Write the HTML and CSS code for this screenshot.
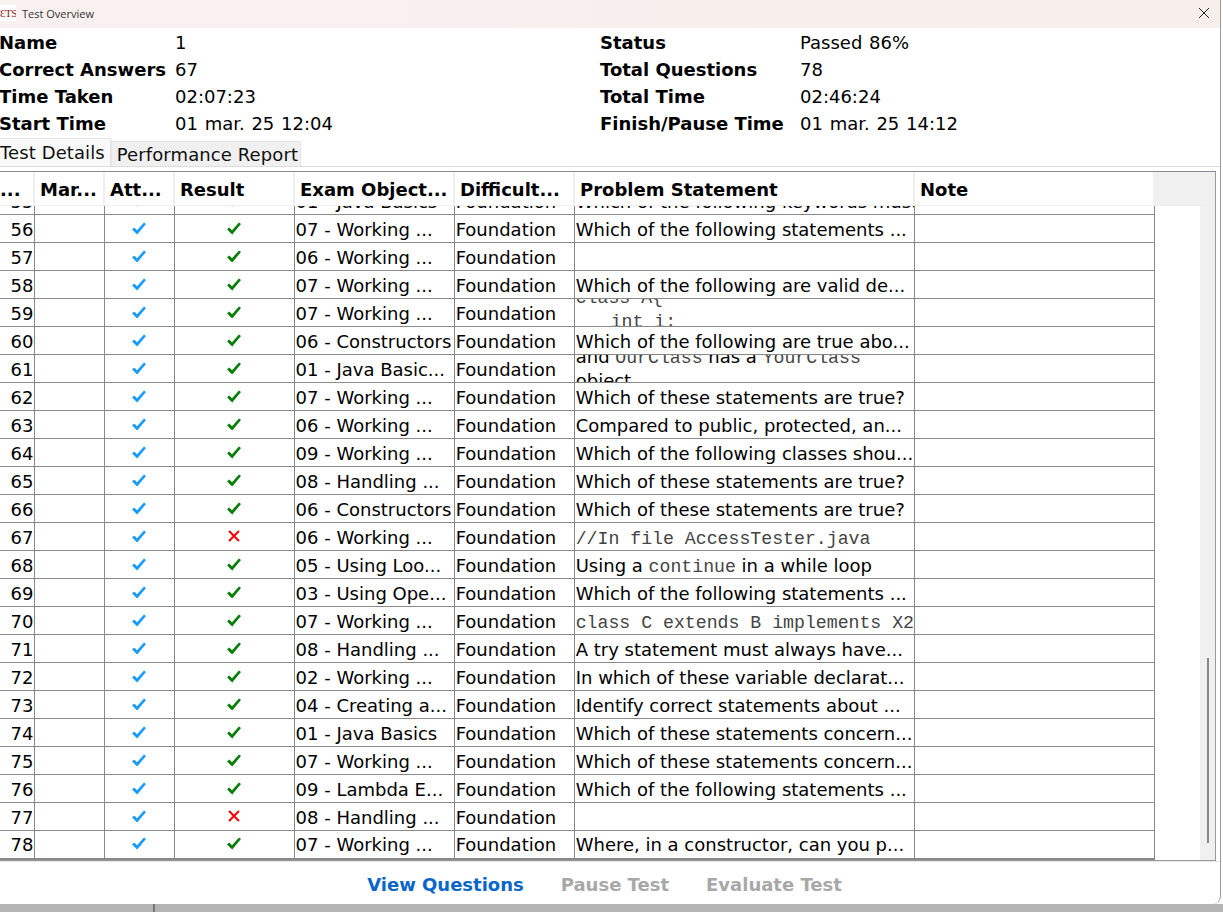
FILE: index.html
```html
<!DOCTYPE html>
<html lang="en">
<head>
  <meta charset="UTF-8">
  <title>Test Overview</title>
  <link rel="stylesheet" href="styles.css">
</head>
<body>
  <svg class="defs" width="0" height="0">
    <symbol id="tick" viewBox="0 0 14 13"><path d="M0 7.5 2.2 5.6 5 8.2 12 .5 14 2 5.2 12.6z"/></symbol>
    <symbol id="cross" viewBox="0 0 12 12"><path d="M1 1 11 11M11 1 1 11" fill="none" stroke="currentColor" stroke-width="2"/></symbol>
  </svg>

  <div class="window">
    <div class="titlebar">
      <span class="logo">ƐTS</span>
      <span class="title">Test Overview</span>
      <svg class="close" width="12" height="12" viewBox="0 0 12 12"><path d="M1 1 11 11M11 1 1 11" fill="none" stroke="#222" stroke-width="1"/></svg>
    </div>

    <div class="summary">
      <b>Name</b><span>1</span><b>Status</b><span>Passed 86%</span>
      <b>Correct Answers</b><span>67</span><b>Total Questions</b><span>78</span>
      <b>Time Taken</b><span>02:07:23</span><b>Total Time</b><span>02:46:24</span>
      <b>Start Time</b><span>01 mar. 25 12:04</span><b>Finish/Pause Time</b><span>01 mar. 25 14:12</span>
    </div>

    <div class="tabs">
      <div class="tab active">Test Details</div>
      <div class="tab">Performance Report</div>
    </div>

    <div class="panel">
      <div class="head">
        <div class="hcell c0">...</div>
        <div class="hcell c1">Mar...</div>
        <div class="hcell c2">Att...</div>
        <div class="hcell c3">Result</div>
        <div class="hcell c4">Exam Object...</div>
        <div class="hcell c5">Difficult...</div>
        <div class="hcell c6">Problem Statement</div>
        <div class="hcell c7">Note</div>
      </div>
      <div class="body">
        <div class="scroller">
          <table class="grid">
            <colgroup><col class="c0"><col class="c1"><col class="c2"><col class="c3"><col class="c4"><col class="c5"><col class="c6"><col class="c7"></colgroup>
            <tr><td class="num">55</td><td></td><td class="ic"><svg class="ok"><use href="#tick"/></svg></td><td class="ic"><svg class="good"><use href="#tick"/></svg></td><td>01 - Java Basics</td><td>Foundation</td><td>Which of the following keywords must...</td><td></td></tr>
            <tr><td class="num">56</td><td></td><td class="ic"><svg class="ok"><use href="#tick"/></svg></td><td class="ic"><svg class="good"><use href="#tick"/></svg></td><td>07 - Working ...</td><td>Foundation</td><td>Which of the following statements ...</td><td></td></tr>
            <tr><td class="num">57</td><td></td><td class="ic"><svg class="ok"><use href="#tick"/></svg></td><td class="ic"><svg class="good"><use href="#tick"/></svg></td><td>06 - Working ...</td><td>Foundation</td><td></td><td></td></tr>
            <tr><td class="num">58</td><td></td><td class="ic"><svg class="ok"><use href="#tick"/></svg></td><td class="ic"><svg class="good"><use href="#tick"/></svg></td><td>07 - Working ...</td><td>Foundation</td><td>Which of the following are valid de...</td><td></td></tr>
            <tr><td class="num">59</td><td></td><td class="ic"><svg class="ok"><use href="#tick"/></svg></td><td class="ic"><svg class="good"><use href="#tick"/></svg></td><td>07 - Working ...</td><td>Foundation</td><td><div class="clip high"><code>class A{</code><code class="indent">int i;</code></div></td><td></td></tr>
            <tr><td class="num">60</td><td></td><td class="ic"><svg class="ok"><use href="#tick"/></svg></td><td class="ic"><svg class="good"><use href="#tick"/></svg></td><td>06 - Constructors</td><td>Foundation</td><td>Which of the following are true abo...</td><td></td></tr>
            <tr><td class="num">61</td><td></td><td class="ic"><svg class="ok"><use href="#tick"/></svg></td><td class="ic"><svg class="good"><use href="#tick"/></svg></td><td>01 - Java Basic...</td><td>Foundation</td><td><div class="clip"><div>and <code>OurClass</code> has a <code>YourClass</code></div><div>object</div></div></td><td></td></tr>
            <tr><td class="num">62</td><td></td><td class="ic"><svg class="ok"><use href="#tick"/></svg></td><td class="ic"><svg class="good"><use href="#tick"/></svg></td><td>07 - Working ...</td><td>Foundation</td><td>Which of these statements are true?</td><td></td></tr>
            <tr><td class="num">63</td><td></td><td class="ic"><svg class="ok"><use href="#tick"/></svg></td><td class="ic"><svg class="good"><use href="#tick"/></svg></td><td>06 - Working ...</td><td>Foundation</td><td>Compared to public, protected, an...</td><td></td></tr>
            <tr><td class="num">64</td><td></td><td class="ic"><svg class="ok"><use href="#tick"/></svg></td><td class="ic"><svg class="good"><use href="#tick"/></svg></td><td>09 - Working ...</td><td>Foundation</td><td>Which of the following classes shou...</td><td></td></tr>
            <tr><td class="num">65</td><td></td><td class="ic"><svg class="ok"><use href="#tick"/></svg></td><td class="ic"><svg class="good"><use href="#tick"/></svg></td><td>08 - Handling ...</td><td>Foundation</td><td>Which of these statements are true?</td><td></td></tr>
            <tr><td class="num">66</td><td></td><td class="ic"><svg class="ok"><use href="#tick"/></svg></td><td class="ic"><svg class="good"><use href="#tick"/></svg></td><td>06 - Constructors</td><td>Foundation</td><td>Which of these statements are true?</td><td></td></tr>
            <tr><td class="num">67</td><td></td><td class="ic"><svg class="ok"><use href="#tick"/></svg></td><td class="ic"><svg class="bad"><use href="#cross"/></svg></td><td>06 - Working ...</td><td>Foundation</td><td><code>//In file AccessTester.java</code></td><td></td></tr>
            <tr><td class="num">68</td><td></td><td class="ic"><svg class="ok"><use href="#tick"/></svg></td><td class="ic"><svg class="good"><use href="#tick"/></svg></td><td>05 - Using Loo...</td><td>Foundation</td><td>Using a <code>continue</code> in a while loop</td><td></td></tr>
            <tr><td class="num">69</td><td></td><td class="ic"><svg class="ok"><use href="#tick"/></svg></td><td class="ic"><svg class="good"><use href="#tick"/></svg></td><td>03 - Using Ope...</td><td>Foundation</td><td>Which of the following statements ...</td><td></td></tr>
            <tr><td class="num">70</td><td></td><td class="ic"><svg class="ok"><use href="#tick"/></svg></td><td class="ic"><svg class="good"><use href="#tick"/></svg></td><td>07 - Working ...</td><td>Foundation</td><td><div class="cut"><code>class C extends B implements X2</code></div></td><td></td></tr>
            <tr><td class="num">71</td><td></td><td class="ic"><svg class="ok"><use href="#tick"/></svg></td><td class="ic"><svg class="good"><use href="#tick"/></svg></td><td>08 - Handling ...</td><td>Foundation</td><td>A try statement must always have...</td><td></td></tr>
            <tr><td class="num">72</td><td></td><td class="ic"><svg class="ok"><use href="#tick"/></svg></td><td class="ic"><svg class="good"><use href="#tick"/></svg></td><td>02 - Working ...</td><td>Foundation</td><td>In which of these variable declarat...</td><td></td></tr>
            <tr><td class="num">73</td><td></td><td class="ic"><svg class="ok"><use href="#tick"/></svg></td><td class="ic"><svg class="good"><use href="#tick"/></svg></td><td>04 - Creating a...</td><td>Foundation</td><td>Identify correct statements about ...</td><td></td></tr>
            <tr><td class="num">74</td><td></td><td class="ic"><svg class="ok"><use href="#tick"/></svg></td><td class="ic"><svg class="good"><use href="#tick"/></svg></td><td>01 - Java Basics</td><td>Foundation</td><td>Which of these statements concern...</td><td></td></tr>
            <tr><td class="num">75</td><td></td><td class="ic"><svg class="ok"><use href="#tick"/></svg></td><td class="ic"><svg class="good"><use href="#tick"/></svg></td><td>07 - Working ...</td><td>Foundation</td><td>Which of these statements concern...</td><td></td></tr>
            <tr><td class="num">76</td><td></td><td class="ic"><svg class="ok"><use href="#tick"/></svg></td><td class="ic"><svg class="good"><use href="#tick"/></svg></td><td>09 - Lambda E...</td><td>Foundation</td><td>Which of the following statements ...</td><td></td></tr>
            <tr><td class="num">77</td><td></td><td class="ic"><svg class="ok"><use href="#tick"/></svg></td><td class="ic"><svg class="bad"><use href="#cross"/></svg></td><td>08 - Handling ...</td><td>Foundation</td><td></td><td></td></tr>
            <tr><td class="num">78</td><td></td><td class="ic"><svg class="ok"><use href="#tick"/></svg></td><td class="ic"><svg class="good"><use href="#tick"/></svg></td><td>07 - Working ...</td><td>Foundation</td><td>Where, in a constructor, can you p...</td><td></td></tr>
          </table>
        </div>
        <div class="scrollbar"><div class="thumb"></div></div>
      </div>
    </div>

    <div class="actions">
      <a class="action primary">View Questions</a>
      <a class="action">Pause Test</a>
      <a class="action">Evaluate Test</a>
    </div>
  </div>
  <div class="desk"><div class="desk-line"></div></div>
</body>
</html>
```

FILE: styles.css
```css
html, body {
  margin: 0;
  padding: 0;
  height: 912px;
  overflow: hidden;
  background: #fff;
  color: #000;
  font-family: "DejaVu Sans", Verdana, sans-serif;
  font-size: 18px;
}

.defs {
  display: block;
  height: 0;
}

.window {
  width: 1220px;
  height: 904px;
  display: flex;
  flex-direction: column;
  background: #fff;
  border-right: 1px solid #999;
  border-bottom-right-radius: 8px;
  overflow: hidden;
}

.titlebar {
  height: 28px;
  flex: none;
  display: flex;
  align-items: center;
  padding-bottom: 2px;
  box-sizing: border-box;
  background: linear-gradient(90deg, #f9f0f0, #f7efeb);
}

.logo {
  width: 16px;
  height: 16px;
  background: #fff;
  color: #8b1a1a;
  font-family: "Liberation Serif", serif;
  font-size: 11px;
  letter-spacing: -.5px;
  line-height: 17px;
  white-space: nowrap;
  overflow: hidden;
}

.title {
  margin-left: 6px;
  font-family: "Open Sans", sans-serif;
  font-size: 11px;
  color: #333;
}

.close {
  margin-left: auto;
  margin-right: 10px;
}

.summary {
  height: 108px;
  padding-top: 1px;
  margin-left: -1px;
  flex: none;
  display: grid;
  grid-template-columns: 176px 425px 200px 1fr;
  grid-auto-rows: 27px;
  line-height: 27px;
  white-space: nowrap;
}

.summary span {
  word-spacing: 1px;
}

.tabs {
  height: 29px;
  flex: none;
  display: flex;
  align-items: flex-end;
  border-bottom: 1px solid #ddd;
}

.tab {
  height: 24px;
  line-height: 26px;
  padding: 0 2px 0 5px;
  background: #f0f0f0;
  border: 1px solid #e4e4e4;
  border-bottom: none;
  color: #111;
  letter-spacing: .1px;
}

.tab.active {
  height: 27px;
  padding: 0 5px 0 0;
  background: #f9f9f9;
  border-left: none;
  line-height: 27px;
}

.panel {
  width: 1216px;
  height: 690px;
  margin-top: 4px;
  box-sizing: border-box;
  flex: none;
  display: flex;
  flex-direction: column;
  border-top: 1px solid #8a8a96;
  border-right: 1px solid #999;
  border-bottom: 1px solid #999;
  background: #f0f0f0;
}

.head {
  height: 33px;
  flex: none;
  display: flex;
  border-bottom: 1px solid #eee;
  font-weight: bold;
  line-height: 36px;
  white-space: nowrap;
}

.hcell {
  box-sizing: border-box;
  flex: none;
  padding-left: 5px;
  background: #fff;
  border-right: 2px solid #eee;
  overflow: hidden;
}

.hcell.c0 { width: 35px; padding-left: 0; }
.hcell.c1 { width: 70px; }
.hcell.c2 { width: 70px; }
.hcell.c3 { width: 120px; }
.hcell.c4 { width: 160px; }
.hcell.c5 { width: 120px; }
.hcell.c6 { width: 340px; }
.hcell.c7 { width: 238px; border-right: none; }

.body {
  flex: 1;
  min-height: 0;
  display: flex;
}

.scroller {
  width: 1200px;
  flex: none;
  background: #fff;
  overflow: hidden;
}

.grid {
  margin-top: -20px;
  width: 1155px;
  table-layout: fixed;
  border-collapse: collapse;
}

col.c0 { width: 34px; }
col.c1 { width: 70px; }
col.c2 { width: 70px; }
col.c3 { width: 120px; }
col.c4 { width: 160px; }
col.c5 { width: 120px; }
col.c6 { width: 340px; }
col.c7 { width: 240px; }

.grid tr {
  height: 28px;
}

.grid td {
  height: 27px;
  box-sizing: border-box;
  padding: 2px 0 0 1px;
  border: 1px solid #888;
  border-left: none;
  white-space: nowrap;
  overflow: hidden;
  line-height: 24px;
}

.grid td.num {
  padding: 2px 0 0 0;
  text-align: right;
}

.grid td.ic {
  padding: 0;
}

.grid td svg {
  display: block;
  margin: -1px auto 0;
}

.grid tr:last-child td {
  border-bottom-width: 2px;
}

.ok {
  width: 14px;
  height: 13px;
  fill: #1a9cff;
}

.good {
  width: 14px;
  height: 13px;
  fill: #0a7d0a;
}

.bad {
  width: 12px;
  height: 12px;
  color: #f00;
}

code {
  font-family: "Liberation Mono", monospace;
  font-size: 18.2px;
  color: #444;
  line-height: 20px;
}

.clip {
  height: 28px;
  margin: -2px 0 -1px;
  display: flex;
  flex-direction: column;
  justify-content: center;
  overflow: hidden;
  line-height: 24px;
}

.clip > * {
  flex: none;
  display: block;
  height: 24px;
}

.clip code {
  line-height: 24px;
}

.clip.high code:first-child {
  margin-top: -7px;
}

.clip code.indent {
  padding-left: 35px;
}

.cut {
  width: 339px;
  overflow: hidden;
}

.scrollbar {
  flex: 1;
  position: relative;
}

.thumb {
  position: absolute;
  left: 7px;
  top: 452px;
  width: 2px;
  height: 185px;
  background: #888;
}

.actions {
  flex: 1;
  display: flex;
  justify-content: center;
  align-items: center;
  gap: 37px;
  padding: 3px 11px 0 0;
  border-top: 1px solid #e8e8e8;
  font-weight: bold;
  color: #a8a8a8;
}

.action.primary {
  color: #0a66c8;
}

.desk {
  height: 8px;
  background: #b4b4b4;
  position: relative;
}

.desk-line {
  position: absolute;
  left: 153px;
  top: 0;
  width: 2px;
  height: 8px;
  background: #777;
}
```
